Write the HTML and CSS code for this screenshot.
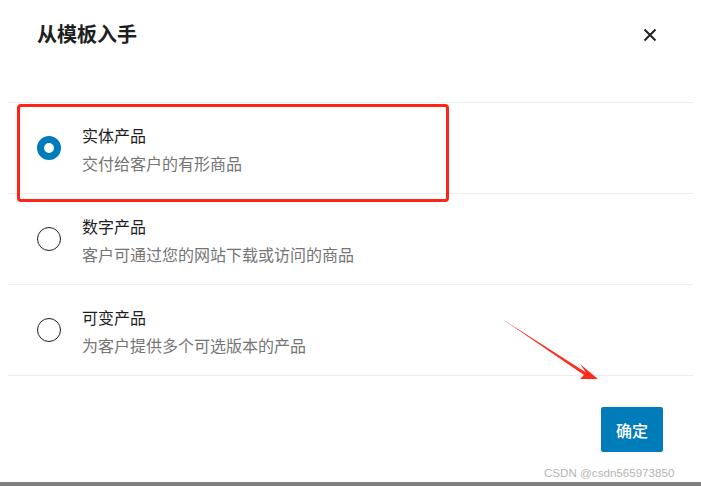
FILE: index.html
```html
<!DOCTYPE html>
<html lang="zh-CN">
<head>
<meta charset="utf-8">
<title>从模板入手</title>
<link rel="stylesheet" href="styles.css">
</head>
<body>
<div class="page">
  <div class="modal">
    <div class="header">
      <h1 class="title">从模板入手</h1>
      <button class="close" aria-label="关闭">
        <svg width="14" height="14" viewBox="0 0 14 14"><path d="M1.5 1.5 L12.5 12.5 M12.5 1.5 L1.5 12.5" stroke="#1e1e1e" stroke-width="1.9" fill="none"/></svg>
      </button>
    </div>
    <ul class="options">
      <li class="option">
        <span class="radio radio-checked"></span>
        <div class="text">
          <div class="opt-title">实体产品</div>
          <div class="opt-desc">交付给客户的有形商品</div>
        </div>
      </li>
      <li class="option">
        <span class="radio"></span>
        <div class="text">
          <div class="opt-title">数字产品</div>
          <div class="opt-desc">客户可通过您的网站下载或访问的商品</div>
        </div>
      </li>
      <li class="option">
        <span class="radio"></span>
        <div class="text">
          <div class="opt-title">可变产品</div>
          <div class="opt-desc">为客户提供多个可选版本的产品</div>
        </div>
      </li>
    </ul>
    <div class="footer">
      <button class="confirm">确定</button>
    </div>
    <div class="highlight"></div>
    <svg class="arrow" width="110" height="70" viewBox="0 0 110 70">
      <polygon points="0,0 84,53.5 78,45 96,60 78,60 82,56" fill="#ff2a1a"/>
    </svg>
    <div class="watermark">CSDN @csdn565973850</div>
  </div>
  <div class="bottom-bar"></div>
</div>
</body>
</html>
```
FILE: styles.css
```css
* { box-sizing: border-box; }
html, body { margin: 0; padding: 0; background: #fff; }
body {
  font-family: "Noto Sans CJK SC", "Noto Sans", sans-serif;
  color: #1e1e1e;
}
.page {
  width: 701px;
  height: 486px;
  display: flex;
  flex-direction: column;
  overflow: hidden;
}
.modal {
  position: relative;
  flex: 1;
  background: #fff;
}
.header {
  height: 102px;
  padding: 20px 44px 0 37px;
  display: flex;
  justify-content: space-between;
  align-items: flex-start;
}
.title {
  margin: 0;
  font-size: 20px;
  line-height: 28px;
  font-weight: 700;
  color: #1e1e1e;
}
.close {
  margin-top: 8px;
  border: 0;
  padding: 0;
  background: none;
  width: 14px;
  height: 14px;
  display: flex;
}
.options {
  list-style: none;
  margin: 0 8px;
  padding: 0;
  border-top: 1px solid #ececec;
}
.option {
  display: flex;
  align-items: center;
  gap: 21px;
  padding: 22px 0 20px 29px;
  border-bottom: 1px solid #ececec;
}
.radio {
  width: 24px;
  height: 24px;
  border-radius: 50%;
  border: 1.5px solid #1e1e1e;
  flex: none;
  margin-top: -2px;
}
.radio-checked {
  border: 7.5px solid #007cba;
  background: #fff;
}
.text {
  display: flex;
  flex-direction: column;
  gap: 8px;
}
.opt-title {
  font-size: 16px;
  line-height: 20px;
  color: #1e1e1e;
}
.opt-desc {
  font-size: 16px;
  line-height: 20px;
  color: #757575;
}
.footer {
  display: flex;
  justify-content: flex-end;
  padding: 31px 38px 0 0;
}
.confirm {
  height: 45px;
  width: 62px;
  padding: 0;
  border: 0;
  border-radius: 2px;
  background: #007cba;
  color: #fff;
  font-family: "Noto Sans CJK SC", "Noto Sans", sans-serif;
  font-size: 16px;
  font-weight: 500;
}
.highlight {
  position: absolute;
  left: 17px;
  top: 104px;
  width: 432px;
  height: 98px;
  border: 3.5px solid #ff2418;
  border-radius: 4px;
}
.arrow {
  position: absolute;
  left: 502px;
  top: 319px;
}
.watermark {
  position: absolute;
  left: 544px;
  top: 465px;
  font-family: "Liberation Sans", "Noto Sans", sans-serif;
  font-size: 11.6px;
  line-height: 15px;
  color: #b4b4b4;
}
.bottom-bar {
  height: 4px;
  flex: none;
  background: #7f7f7f;
}
```
